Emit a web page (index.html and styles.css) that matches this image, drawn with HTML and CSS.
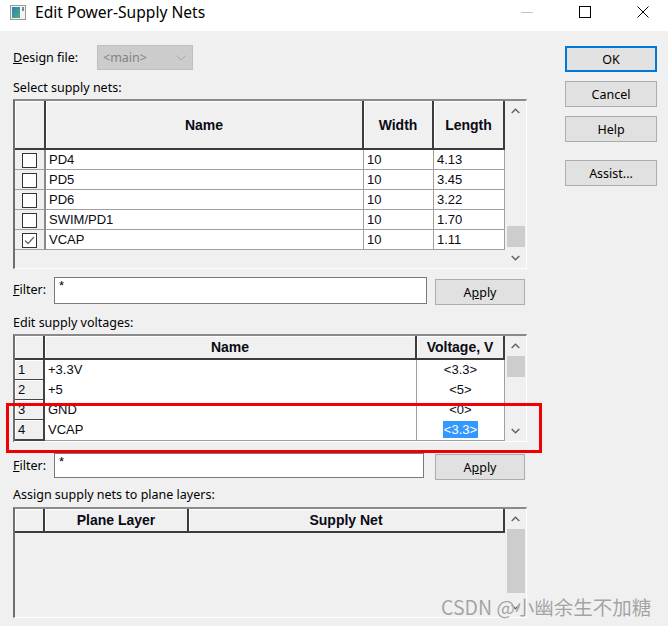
FILE: index.html
```html
<!DOCTYPE html>
<html>
<head>
<meta charset="utf-8">
<title>Edit Power-Supply Nets</title>
<link rel="stylesheet" href="styles.css">
</head>
<body>
<div class="window">
  <div class="titlebar">
    <svg class="app-icon" width="16" height="15" viewBox="0 0 16 15">
      <defs>
        <linearGradient id="ig" x1="0" y1="0" x2="1" y2="1">
          <stop offset="0" stop-color="#2f7fb8"/>
          <stop offset="1" stop-color="#4fae7a"/>
        </linearGradient>
      </defs>
      <rect x="0.5" y="0.5" width="15" height="14" fill="#f4f4f4" stroke="#9a9a9a"/>
      <rect x="2" y="2" width="8" height="11" fill="url(#ig)"/>
      <rect x="12" y="2" width="2" height="4" fill="#7a8a9a"/>
    </svg>
    <span class="title">Edit Power-Supply Nets</span>
    <div class="caption-btns">
      <span class="cap-min"></span>
      <span class="cap-max"></span>
      <svg class="cap-close" width="12" height="12" viewBox="0 0 12 12"><path d="M0.5 0.5 L11.5 11.5 M11.5 0.5 L0.5 11.5" stroke="#000" stroke-width="1" fill="none"/></svg>
    </div>
  </div>

  <div class="client">
    <div class="left">
      <div class="design-row">
        <span class="design-label"><u>D</u>esign file:</span>
        <div class="combo">
          <span class="combo-text">&lt;main&gt;</span>
          <svg width="10" height="6" viewBox="0 0 10 6"><polyline points="0.5,0.5 5,5 9.5,0.5" fill="none" stroke="#a8a8a8" stroke-width="1"/></svg>
        </div>
      </div>

      <div class="section-label sl-1">Select supply nets:</div>
      <div class="grid-frame gf-1">
        <div class="cells">
          <div class="grid g1 hdr-tall">
            <div class="hc"></div>
            <div class="hc">Name</div>
            <div class="hc">Width</div>
            <div class="hc">Length</div>
          </div>
          <div class="grid g1 row">
            <div class="cb-cell"><span class="cb"></span></div>
            <div class="c">PD4</div><div class="c">10</div><div class="c">4.13</div>
          </div>
          <div class="grid g1 row">
            <div class="cb-cell"><span class="cb"></span></div>
            <div class="c">PD5</div><div class="c">10</div><div class="c">3.45</div>
          </div>
          <div class="grid g1 row">
            <div class="cb-cell"><span class="cb"></span></div>
            <div class="c">PD6</div><div class="c">10</div><div class="c">3.22</div>
          </div>
          <div class="grid g1 row">
            <div class="cb-cell"><span class="cb"></span></div>
            <div class="c">SWIM/PD1</div><div class="c">10</div><div class="c">1.70</div>
          </div>
          <div class="grid g1 row">
            <div class="cb-cell"><span class="cb"><svg width="13" height="13" viewBox="0 0 13 13"><polyline points="2,6.5 5,9.5 11,3" fill="none" stroke="#6a6a6a" stroke-width="1.3"/></svg></span></div>
            <div class="c">VCAP</div><div class="c">10</div><div class="c">1.11</div>
          </div>
        </div>
        <div class="vsb">
          <div class="sb-btn"><svg width="9" height="6" viewBox="0 0 9 6"><polyline points="0.7,5 4.5,1.2 8.3,5" fill="none" stroke="#606060" stroke-width="1.4"/></svg></div>
          <div class="sb-track track-end"><div class="thumb thumb-s"></div></div>
          <div class="sb-btn sb-down"><svg width="9" height="6" viewBox="0 0 9 6"><polyline points="0.7,1 4.5,4.8 8.3,1" fill="none" stroke="#606060" stroke-width="1.4"/></svg></div>
        </div>
      </div>

      <div class="filter-row fr-1">
        <span class="filter-label"><u>F</u>ilter:</span>
        <div class="input in-1">*</div>
        <div class="btn apply ap-1">A<u>p</u>ply</div>
      </div>

      <div class="section-label sl-2">Edit supply voltages:</div>
      <div class="grid-frame gf-2">
        <div class="cells">
          <div class="grid g2 hdr">
            <div class="hc"></div>
            <div class="hc">Name</div>
            <div class="hc">Voltage, V</div>
          </div>
          <div class="grid g2 row">
            <div class="num">1</div><div class="c">+3.3V</div><div class="c ctr">&lt;3.3&gt;</div>
          </div>
          <div class="grid g2 row">
            <div class="num">2</div><div class="c">+5</div><div class="c ctr">&lt;5&gt;</div>
          </div>
          <div class="grid g2 row">
            <div class="num">3</div><div class="c">GND</div><div class="c ctr">&lt;0&gt;</div>
          </div>
          <div class="grid g2 row">
            <div class="num">4</div><div class="c">VCAP</div><div class="c ctr"><span class="sel">&lt;3.3&gt;</span></div>
          </div>
        </div>
        <div class="vsb">
          <div class="sb-btn"><svg width="9" height="6" viewBox="0 0 9 6"><polyline points="0.7,5 4.5,1.2 8.3,5" fill="none" stroke="#606060" stroke-width="1.4"/></svg></div>
          <div class="sb-track"><div class="thumb thumb-s"></div></div>
          <div class="sb-btn sb-down"><svg width="9" height="6" viewBox="0 0 9 6"><polyline points="0.7,1 4.5,4.8 8.3,1" fill="none" stroke="#606060" stroke-width="1.4"/></svg></div>
        </div>
      </div>

      <div class="filter-row fr-2">
        <span class="filter-label"><u>F</u>ilter:</span>
        <div class="input in-2">*</div>
        <div class="btn apply ap-2">A<u>p</u>ply</div>
      </div>

      <div class="section-label sl-3">Assign supply nets to plane layers:</div>
      <div class="grid-frame gf-3">
        <div class="cells">
          <div class="grid g3 hdr">
            <div class="hc"></div>
            <div class="hc">Plane Layer</div>
            <div class="hc">Supply Net</div>
          </div>
        </div>
        <div class="vsb">
          <div class="sb-btn"><svg width="9" height="6" viewBox="0 0 9 6"><polyline points="0.7,5 4.5,1.2 8.3,5" fill="none" stroke="#606060" stroke-width="1.4"/></svg></div>
          <div class="sb-track"><div class="thumb thumb-l"></div></div>
          <div class="sb-btn sb-down"><svg width="9" height="6" viewBox="0 0 9 6"><polyline points="0.7,1 4.5,4.8 8.3,1" fill="none" stroke="#606060" stroke-width="1.4"/></svg></div>
        </div>
      </div>
    </div>

    <div class="right">
      <div class="btn side default">OK</div>
      <div class="btn side">Cancel</div>
      <div class="btn side">Help</div>
      <div class="btn side assist">Assist...</div>
    </div>
  </div>

  <div class="highlight"></div>
  <div class="watermark">CSDN @小幽余生不加糖</div>
</div>
</body>
</html>
```

FILE: styles.css
```css
* { box-sizing: border-box; }

body {
  margin: 0;
  background: #f0f0f0;
  font-family: "Noto Sans", "Liberation Sans", sans-serif;
  font-size: 12.5px;
  color: #000;
}

.window {
  position: relative;
  width: 668px;
  height: 626px;
  overflow: hidden;
  background: #f0f0f0;
}

/* title bar */
.titlebar {
  height: 31px;
  background: #fff;
  display: flex;
  align-items: center;
  padding-bottom: 7px;
}
.app-icon { margin-left: 10px; flex: none; }
.title {
  margin-left: 9px;
  font-size: 15.6px;
  line-height: 18px;
  color: #000;
}
.caption-btns {
  margin-left: auto;
  display: flex;
  align-items: center;
  gap: 46px;
  padding-right: 19px;
}
.cap-min { width: 12px; height: 1px; background: #c4c4c4; }
.cap-max { width: 12px; height: 12px; border: 1px solid #000; }
.cap-close { display: block; }

/* client */
.client {
  display: flex;
  padding: 14px 0 0 13px;
}
.left {
  width: 514px;
  display: flex;
  flex-direction: column;
}
.right {
  margin-left: 38px;
  padding-top: 1px;
  display: flex;
  flex-direction: column;
}

.design-row {
  display: flex;
  align-items: center;
  height: 25px;
}
.design-label { width: 84px; }
.combo {
  width: 96px;
  height: 25px;
  background: #cccccc;
  border: 1px solid #bfbfbf;
  display: flex;
  align-items: center;
  justify-content: space-between;
  padding: 0 6px 0 5px;
}
.combo-text { color: #838383; }

.section-label { line-height: 16px; }
.sl-1 { margin-top: 10px; }
.sl-2 { margin-top: 10px; }
.sl-3 { margin-top: 7px; }

/* grid frames */
.grid-frame {
  display: flex;
  width: 514px;
  margin-top: 3px;
  border-style: solid;
  border-width: 2px 1px 1px 2px;
  border-color: #8a8a8a #ffffff #ffffff #6e6e6e;
  background: #f0f0f0;
}
.gf-1 { height: 170px; }
.gf-2 { height: 108px; }
.gf-3 { height: 111px; margin-top: 4px; }

.cells { width: 490px; }

.grid { display: grid; }
.g1 { grid-template-columns: 31px 318px 70px 71px; }
.g2 { grid-template-columns: 30px 372px 88px; }
.g3 { grid-template-columns: 30px 144px 316px; }

.hdr-tall { height: 49px; }
.hdr { height: 24px; }

.hc {
  background: #f0f0f0;
  border-right: 2px solid #3c3c3c;
  border-bottom: 2px solid #3c3c3c;
  box-shadow: inset 1px 1px 0 #ffffff;
  display: flex;
  align-items: center;
  justify-content: center;
  font-family: "Liberation Sans", Arial, sans-serif;
  font-weight: bold;
  font-size: 14px;
  color: #0a0a14;
}

.row { height: 20px; }
.c {
  background: #fff;
  border-right: 1px solid #a0a0a0;
  border-bottom: 1px solid #a0a0a0;
  padding-left: 3px;
  font-family: "Liberation Sans", Arial, sans-serif;
  font-size: 13px;
  line-height: 19px;
  color: #0a0a14;
  white-space: nowrap;
  overflow: hidden;
}
.ctr { text-align: center; padding-left: 0; }
.sel {
  display: inline-block;
  background: #3399ff;
  color: #fff;
  line-height: 17px;
  padding: 0 1px;
  vertical-align: top;
  margin-top: 1px;
}

.cb-cell {
  background: #f0f0f0;
  border-right: 2px solid #8a8a8a;
  border-bottom: 1px solid #a0a0a0;
  display: flex;
  align-items: flex-end;
  justify-content: center;
  padding-bottom: 1px;
}
.cb {
  width: 15px;
  height: 15px;
  background: #fff;
  border: 1px solid #333;
  display: flex;
  align-items: center;
  justify-content: center;
}
.cb svg { display: block; }

.num {
  background: #f0f0f0;
  border-right: 2px solid #444;
  border-bottom: 2px solid #444;
  box-shadow: inset 1px 1px 0 #fff;
  padding-left: 3px;
  font-family: "Liberation Sans", Arial, sans-serif;
  font-size: 13px;
  line-height: 19px;
  color: #0a0a14;
}

/* scrollbars */
.vsb {
  width: 21px;
  display: flex;
  flex-direction: column;
  background: #f0f0f0;
}
.sb-btn {
  height: 20px;
  flex: none;
  display: flex;
  align-items: center;
  justify-content: center;
}
.sb-btn svg { display: block; }
.sb-down { height: 21px; }
.sb-track {
  flex: 1;
  display: flex;
  flex-direction: column;
  padding: 0 1px 0 2px;
}
.track-end { justify-content: flex-end; }
.thumb { background: #cdcdcd; }
.thumb-s { height: 21px; }
.thumb-l { height: 64px; }

/* filters */
.filter-row {
  display: flex;
  align-items: flex-start;
}
.fr-1 { margin-top: 8px; }
.fr-2 { margin-top: 11px; }
.filter-label { width: 41px; line-height: 25px; }
.input {
  background: #fff;
  border: 1px solid #7a7a7a;
  padding: 1px 0 0 4px;
  line-height: 14px;
  font-family: "Liberation Sans", Arial, sans-serif;
  font-size: 13px;
}
.in-1 { width: 373px; height: 27px; }
.in-2 { width: 370px; height: 25px; }

.btn {
  background: #e1e1e1;
  border: 1px solid #adadad;
  display: flex;
  align-items: center;
  justify-content: center;
  height: 26px;
}
.apply { width: 90px; margin-top: 2px; }
.ap-1 { margin-left: 8px; }
.ap-2 { margin-left: 11px; margin-top: 1px; }

.side { width: 92px; margin-bottom: 9px; }
.default { border: 2px solid #0078d7; }
.assist { margin-top: 9px; }

/* overlays */
.highlight {
  position: absolute;
  left: 6px;
  top: 403px;
  width: 536px;
  height: 50px;
  border: 3px solid #f00000;
}
.watermark {
  position: absolute;
  left: 441px;
  top: 595px;
  font-family: "Noto Sans CJK SC", "Noto Sans", sans-serif;
  font-size: 19.5px;
  line-height: 24px;
  color: #a3a3a3;
  text-shadow: 0 0 1px #fff;
  white-space: nowrap;
}
```
